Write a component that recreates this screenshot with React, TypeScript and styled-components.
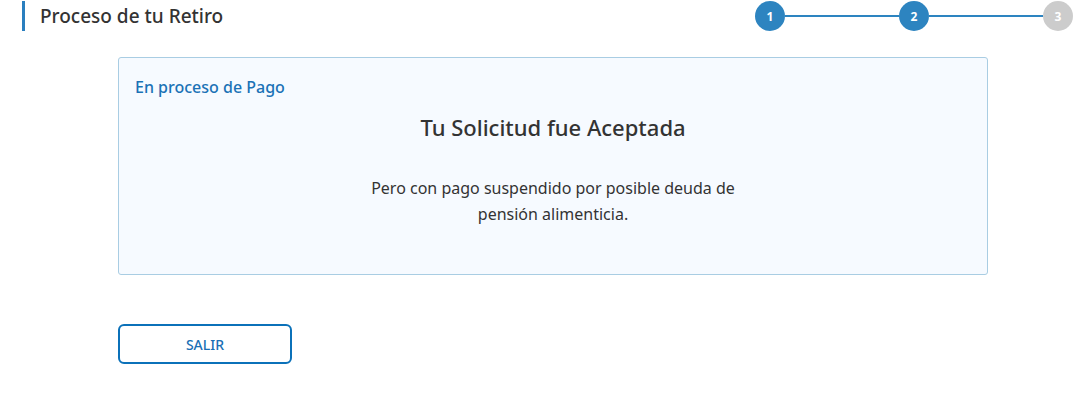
import * as React from 'react';
import styled, { createGlobalStyle } from 'styled-components';

const GlobalStyle = createGlobalStyle`
  body {
    margin: 0;
    background: #ffffff;
    font-family: 'Noto Sans', 'Open Sans', sans-serif;
    color: #333333;
  }
`;

const Page = styled.div`
  width: 1082px;
  height: 400px;
  overflow: hidden;
`;

const Header = styled.header`
  display: flex;
  align-items: center;
  justify-content: space-between;
  height: 32px;
  padding: 0 9px 0 22px;
`;

const Title = styled.h1`
  margin: 0;
  height: 30px;
  display: flex;
  align-items: center;
  border-left: 3px solid #2a7fbf;
  padding-left: 15px;
  font-size: 19px;
  font-weight: 500;
  color: #333333;
`;

const Stepper = styled.ol`
  display: flex;
  align-items: center;
  list-style: none;
  margin: 0;
  padding: 0;
`;

const StepCircle = styled.li<{ $active: boolean }>`
  width: 30px;
  height: 30px;
  border-radius: 50%;
  background: ${({ $active }) => ($active ? '#2d84c0' : '#cccccc')};
  color: #ffffff;
  font-size: 12px;
  font-weight: 700;
  display: flex;
  align-items: center;
  justify-content: center;
`;

const StepLine = styled.li<{ $active: boolean }>`
  width: 114px;
  height: 2px;
  background: ${({ $active }) => ($active ? '#2d84c0' : '#cccccc')};
`;

const Main = styled.main`
  padding: 25px 0 0 118px;
`;

const Card = styled.section`
  width: 870px;
  height: 218px;
  box-sizing: border-box;
  border: 1px solid #a9cde3;
  border-radius: 3px;
  background: #f6faff;
  padding: 18px 16px 0;
`;

const Status = styled.div`
  font-size: 16px;
  font-weight: 500;
  color: #1a72b6;
  line-height: 22px;
`;

const Heading = styled.h2`
  margin: 14px 0 0;
  text-align: center;
  font-size: 22px;
  font-weight: 500;
  line-height: 30px;
  color: #333333;
`;

const Message = styled.p`
  margin: 33px auto 0;
  max-width: 380px;
  text-align: center;
  font-size: 16px;
  line-height: 26px;
  color: #333333;
`;

const ExitButton = styled.button`
  margin-top: 49px;
  width: 174px;
  height: 40px;
  border: 2px solid #0b71b9;
  border-radius: 6px;
  background: #ffffff;
  color: #1a6fb5;
  font-family: 'Noto Sans', 'Open Sans', sans-serif;
  font-size: 14px;
  font-weight: 500;
  cursor: pointer;
`;

const steps = [1, 2, 3];
const current = 2;

export default function App() {
  return (
    <Page>
      <GlobalStyle />
      <Header>
        <Title>Proceso de tu Retiro</Title>
        <Stepper>
          {steps.map((n, i) => (
            <React.Fragment key={n}>
              {i > 0 && <StepLine $active={n <= current + 1} />}
              <StepCircle $active={n <= current}>{n}</StepCircle>
            </React.Fragment>
          ))}
        </Stepper>
      </Header>
      <Main>
        <Card>
          <Status>En proceso de Pago</Status>
          <Heading>Tu Solicitud fue Aceptada</Heading>
          <Message>Pero con pago suspendido por posible deuda de pensión alimenticia.</Message>
        </Card>
        <ExitButton>SALIR</ExitButton>
      </Main>
    </Page>
  );
}
